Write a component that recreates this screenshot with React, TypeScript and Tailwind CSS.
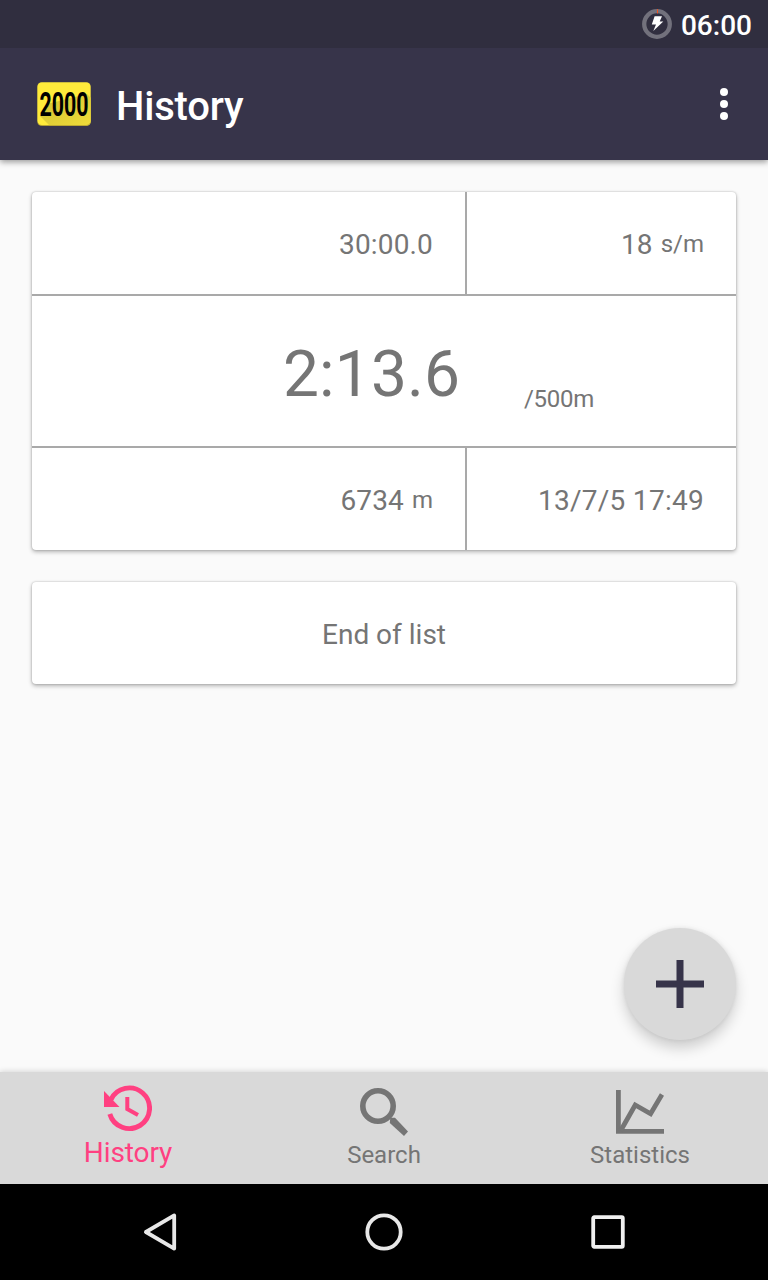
import type { ReactNode } from "react";

function StatusBar() {
  return (
    <div className="relative z-20 flex h-12 items-center justify-end bg-[#302e3f] pr-4 text-white">
      <svg className="mr-[9px] h-[30px] w-[30px]" viewBox="0 0 30 30">
        <circle cx="15" cy="15" r="12.8" fill="none" stroke="#72717c" strokeWidth="4.3" />
        <rect x="15" y="0.2" width="1" height="4.2" fill="#f4511e" />
        <path d="M12.6 7.3H20L17.7 12.6H21.3L11.3 22L14 15.6H9.8Z" fill="#fff" />
      </svg>
      <span className="mt-1 text-[28px] leading-8 font-medium">06:00</span>
    </div>
  );
}

function Logo() {
  return (
    <svg className="h-11 w-[54px] overflow-visible" viewBox="0 0 54 44">
      <defs>
        <linearGradient id="shade" x1="0" y1="0" x2="1" y2="1">
          <stop offset="0" stopColor="#d0bf32" />
          <stop offset="1" stopColor="#efdc3a" />
        </linearGradient>
      </defs>
      <rect x="0.3" y="0.3" width="53.4" height="43.2" rx="4.5" fill="#ffeb3b" />
      <path d="M3 34L10 22L50 12L53.7 15.7V39Q53.7 43.5 49.2 43.5H12.5Z" fill="url(#shade)" />
      <path d="M0.8 41Q1.7 43.5 4.8 43.5H49.2Q52.5 43.5 53.2 41" fill="none" stroke="#b9a52f" strokeWidth="0.8" />
      <text
        x="2.5"
        y="34"
        className="font-['Liberation_Sans_Narrow','Roboto',sans-serif] text-[34px] leading-none font-bold"
        textLength="49"
        lengthAdjust="spacingAndGlyphs"
        fill="#000"
      >
        2000
      </text>
    </svg>
  );
}

function AppBar() {
  return (
    <header className="z-10 flex h-28 items-center bg-[#37344a] pr-10 pl-[37px] text-white shadow-[0_2px_6px_rgba(0,0,0,0.4)]">
      <Logo />
      <h1 className="mt-1.5 ml-[25px] flex-1 text-[40px] leading-[48px] font-medium tracking-[-0.2px]">History</h1>
      <svg className="h-8 w-2" viewBox="0 0 8 32" fill="#fff">
        <circle cx="4" cy="4" r="4" />
        <circle cx="4" cy="16" r="4" />
        <circle cx="4" cy="28" r="4" />
      </svg>
    </header>
  );
}

function Card({ children }: { children: ReactNode }) {
  return (
    <section className="overflow-hidden rounded-[4px] bg-white shadow-[0_0_2px_rgba(0,0,0,0.25),0_2px_4px_rgba(0,0,0,0.28)]">
      {children}
    </section>
  );
}

function Row({ left, right }: { left: ReactNode; right: ReactNode }) {
  return (
    <div className="flex h-[102px]">
      <div className="flex w-[435px] items-center justify-end gap-2 border-r-2 border-[#a9a9a9] pr-8">{left}</div>
      <div className="flex flex-1 items-center justify-end gap-2 pr-8">{right}</div>
    </div>
  );
}

function Value({ children }: { children: ReactNode }) {
  return <span className="pt-1 tracking-[0.15px]">{children}</span>;
}

function Unit({ children }: { children: ReactNode }) {
  return <span className="pt-0.5 text-2xl leading-8">{children}</span>;
}

function HistoryIcon() {
  return (
    <svg className="h-12 w-12" viewBox="0 0 48 48" fill="none" stroke="currentColor">
      <path d="M5.8 30A20.3 20.3 0 1 0 6.9 15.6" strokeWidth="4.9" />
      <path d="M23.3 13V25L34 31" strokeWidth="4" />
      <path d="M0 7V23H15.5Z" fill="currentColor" stroke="none" />
    </svg>
  );
}

function SearchIcon() {
  return (
    <svg className="h-12 w-12" viewBox="0 0 48 48" fill="none" stroke="currentColor">
      <circle cx="18" cy="18" r="15.2" strokeWidth="5.6" />
      <path d="M30.3 29.8L35 29.8L48 43.5L44 47.9L29.8 35Z" fill="currentColor" stroke="none" />
    </svg>
  );
}

function StatisticsIcon() {
  return (
    <svg className="h-12 w-12" viewBox="0 0 48 48" fill="none" stroke="currentColor">
      <path d="M2.4 2V43.4H48" strokeWidth="4.8" />
      <path d="M4.5 43L19.2 17L34.6 25.8L46 6.5" strokeWidth="4.8" />
    </svg>
  );
}

function BottomTabs() {
  return (
    <nav className="z-10 flex h-28 bg-[#d9d9d9] text-[#757575] shadow-[0_-1px_5px_rgba(0,0,0,0.14)]">
      <div className="flex flex-1 flex-col items-center pt-3 text-[#ff4081]">
        <HistoryIcon />
        <span className="mt-[5px] text-[28px] leading-8 tracking-[-0.1px]">History</span>
      </div>
      <div className="flex flex-1 flex-col items-center pt-4">
        <SearchIcon />
        <span className="mt-[3px] text-2xl leading-8">Search</span>
      </div>
      <div className="flex flex-1 flex-col items-center pt-4">
        <StatisticsIcon />
        <span className="mt-[3px] text-2xl leading-8">Statistics</span>
      </div>
    </nav>
  );
}

function SystemBar() {
  return (
    <div className="z-20 flex h-24 items-center justify-between bg-black px-[136px]">
      <svg className="h-12 w-12" viewBox="0 0 48 48" fill="none" stroke="#e8e8e8" strokeWidth="3.8" strokeLinejoin="round">
        <path d="M38.2 7.4V40.6L9.9 24Z" />
      </svg>
      <svg className="h-12 w-12" viewBox="0 0 48 48" fill="none" stroke="#e8e8e8" strokeWidth="3.8">
        <circle cx="24" cy="24" r="16.7" />
      </svg>
      <svg className="h-12 w-12" viewBox="0 0 48 48" fill="none" stroke="#f0f0f0" strokeWidth="3.8">
        <rect x="9.2" y="9.2" width="29.6" height="29.6" rx="1" />
      </svg>
    </div>
  );
}

export default function App() {
  return (
    <div className="flex h-[1280px] w-[768px] flex-col overflow-hidden bg-[#fafafa] font-['Roboto',sans-serif]">
      <StatusBar />
      <AppBar />
      <main className="relative flex flex-1 flex-col gap-8 p-8 text-[28px] leading-8 text-[#757575]">
        <Card>
          <Row
            left={<Value>30:00.0</Value>}
            right={
              <>
                <Value>18</Value>
                <Unit>s/m</Unit>
              </>
            }
          />
          <div className="flex h-[154px] items-baseline border-y-2 border-[#a9a9a9] pt-[41px] pl-[251px]">
            <span className="w-[241px] text-[64px] leading-[75px] tracking-[0.15px]">2:13.6</span>
            <span className="relative top-[11px] text-2xl tracking-[-0.3px]">/500m</span>
          </div>
          <Row
            left={
              <>
                <Value>6734</Value>
                <Unit>m</Unit>
              </>
            }
            right={<span className="pt-1 tracking-[0.28px]">13/7/5 17:49</span>}
          />
        </Card>
        <Card>
          <div className="flex h-[102px] items-center justify-center pt-1">End of list</div>
        </Card>
        <button
          aria-label="Add"
          className="absolute right-8 bottom-8 flex h-28 w-28 items-center justify-center rounded-full bg-[#d9d9d9] shadow-[0_0_4px_rgba(0,0,0,0.08),0_8px_14px_rgba(0,0,0,0.18)]"
        >
          <svg className="h-12 w-12" viewBox="0 0 48 48" fill="none" stroke="#37344a" strokeWidth="7">
            <path d="M24 0V48M0 24H48" />
          </svg>
        </button>
      </main>
      <BottomTabs />
      <SystemBar />
    </div>
  );
}
